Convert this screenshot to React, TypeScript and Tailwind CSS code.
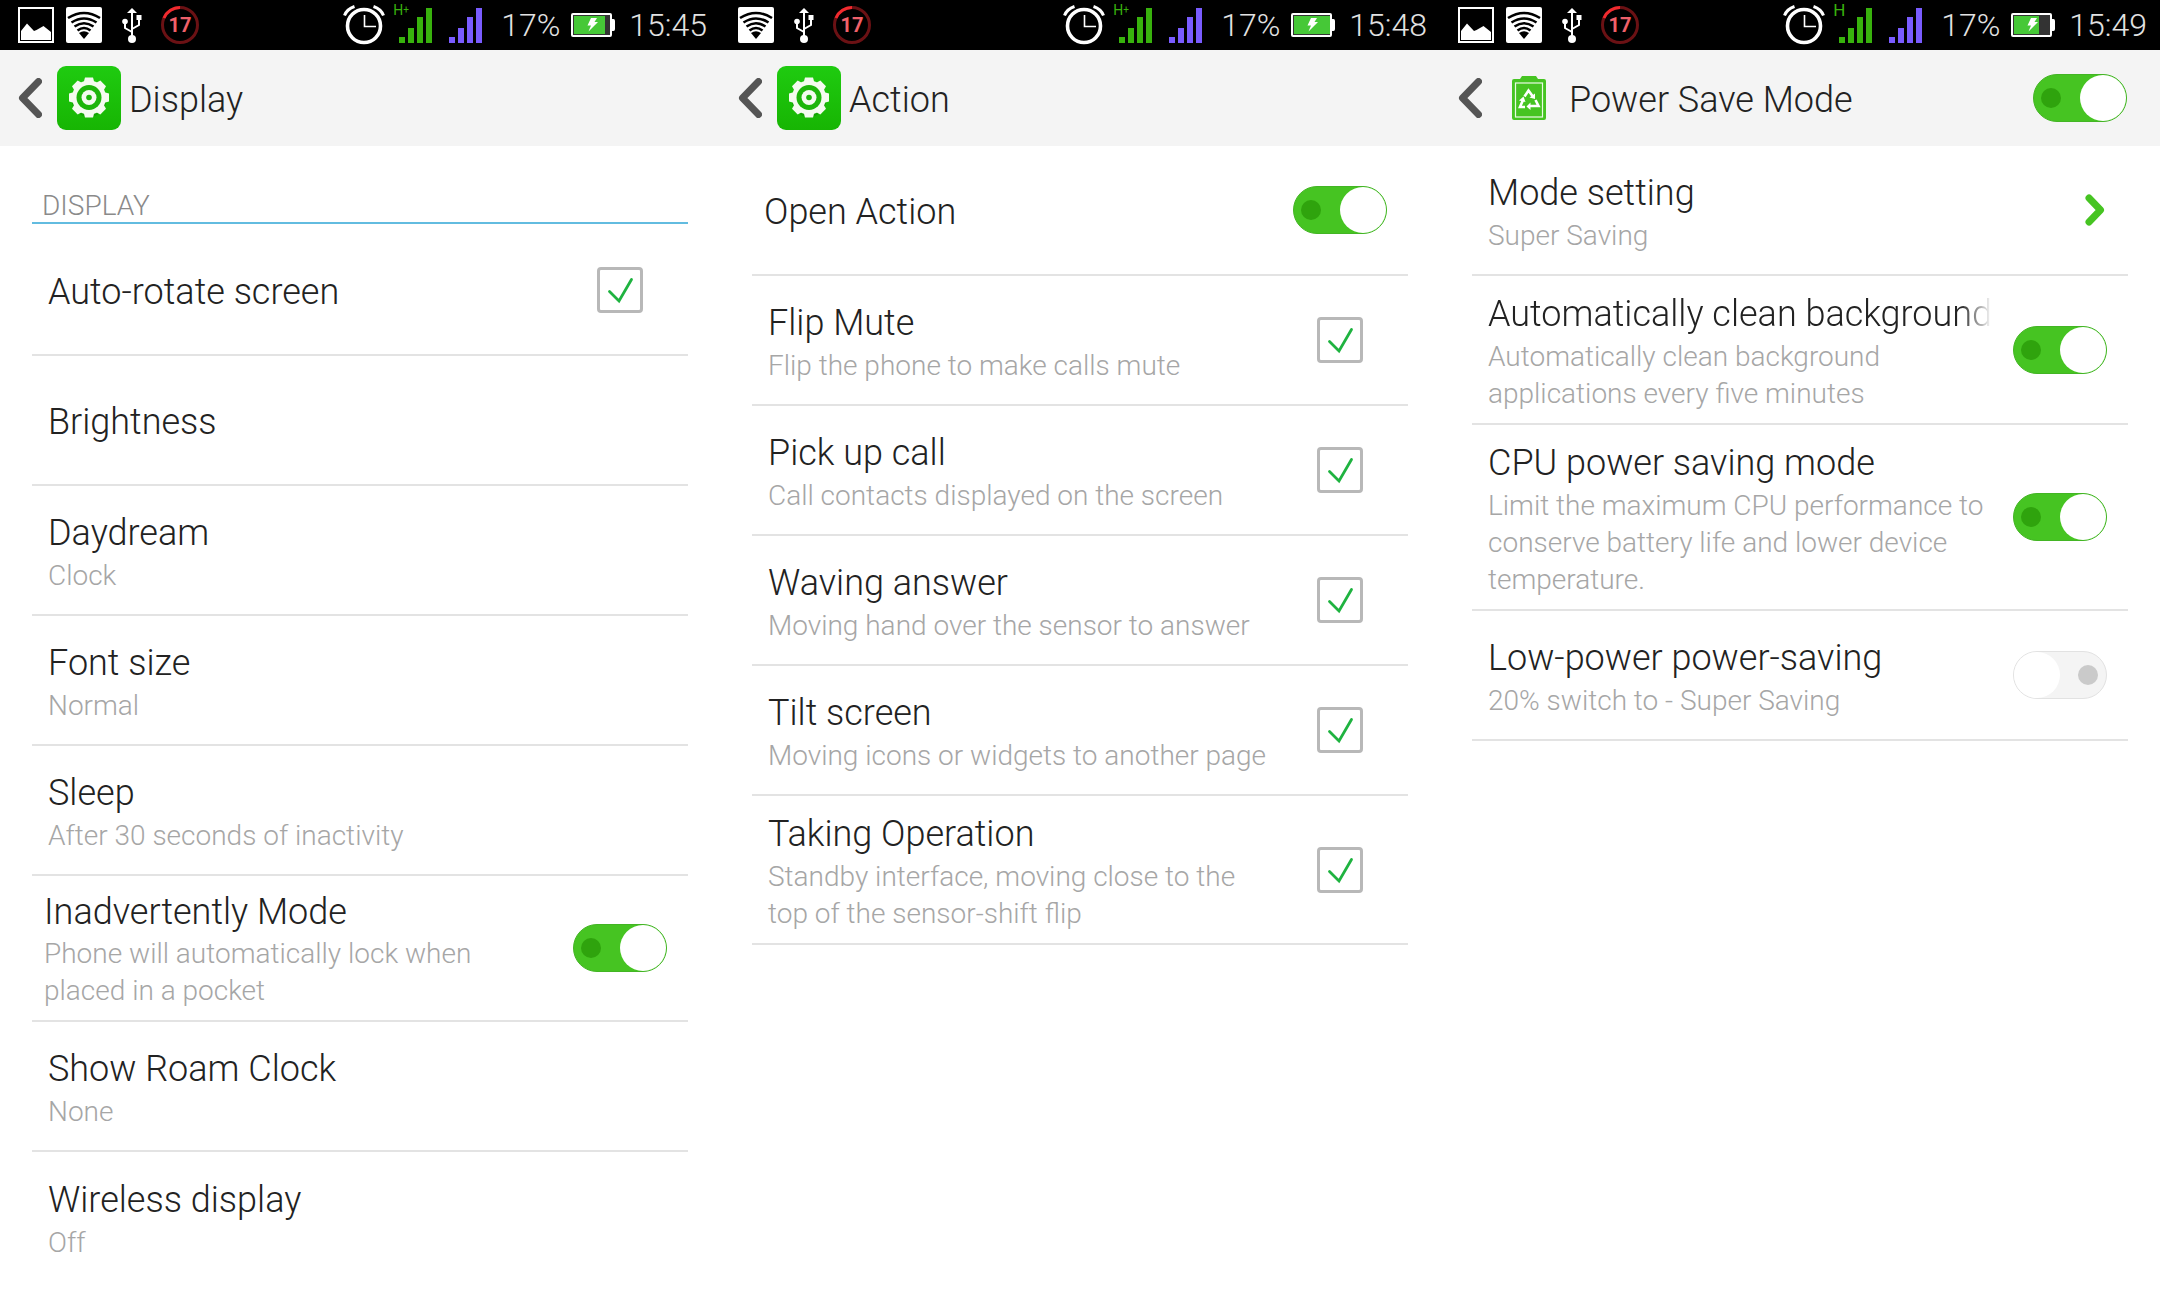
import { useId, type ReactNode } from "react";

/* ---------- status bar icons ---------- */

function PictureIcon() {
  return (
    <svg viewBox="0 0 36 36" className="h-9 w-9" aria-hidden="true">
      <rect x="1" y="1" width="34" height="34" fill="#000" stroke="#fff" strokeWidth="2" />
      <path d="M3 24 L9 16.500 L16 24 L18.500 23 L25.500 19 L33 25 V33 H3 Z" fill="#fff" />
    </svg>
  );
}

function WifiIcon() {
  return (
    <svg viewBox="0 0 36 36" className="h-9 w-9" aria-hidden="true">
      <rect width="36" height="36" rx="2" fill="#fff" />
      <g fill="none" stroke="#000" strokeWidth="2.600">
        <path d="M2 11 Q18 1 34 11" />
        <path d="M5.500 15.500 Q18 7.500 30.500 15.500" />
        <path d="M8.500 19.500 Q18 13 27.500 19.500" />
        <path d="M11.500 23.500 Q18 18.500 24.500 23.500" />
      </g>
      <path d="M13 26 Q18 22.500 23 26 L18 32 Z" fill="#000" />
    </svg>
  );
}

function UsbIcon() {
  return (
    <svg viewBox="0 0 36 36" className="h-9 w-9" aria-hidden="true">
      <g fill="none" stroke="#fff" strokeWidth="2">
        <path d="M18 4 V32" />
        <path d="M18 25 L11 21 V14" />
        <path d="M18 22 L25 18 V12" />
      </g>
      <path d="M18 1 L23 6 H13 Z" fill="#fff" />
      <circle cx="11" cy="14.500" r="2.800" fill="#fff" />
      <rect x="22.500" y="8" width="5" height="5" fill="#fff" />
      <circle cx="18" cy="32" r="4" fill="#fff" />
    </svg>
  );
}

function LevelBadge() {
  return (
    <div className="grid h-10 w-10 place-items-center">
      <svg viewBox="0 0 40 40" className="h-10 w-10 [grid-area:1/1]" fill="none" aria-hidden="true">
        <circle cx="20" cy="20" r="17.500" stroke="#6b1114" strokeWidth="3" />
        <path d="M4 13 A17.500 17.500 0 0 1 20 2.500" stroke="#f02a2e" strokeWidth="3" />
      </svg>
      <span className="text-xl leading-5 font-bold text-[#f0606a] [grid-area:1/1]">17</span>
    </div>
  );
}

function AlarmIcon() {
  return (
    <svg viewBox="0 0 42 40" className="h-10 w-[42px]" fill="none" stroke="#fff" aria-hidden="true">
      <circle cx="21" cy="21" r="16.500" strokeWidth="3.600" />
      <path d="M1.500 10.500 Q4 4 11.500 1.500" strokeWidth="3" />
      <path d="M40.500 10.500 Q38 4 30.500 1.500" strokeWidth="3" />
      <path d="M21.500 10 V21.500 H33" strokeWidth="1.600" />
    </svg>
  );
}

function Bars({ tone }: { tone: "green" | "violet" }) {
  return (
    <svg
      viewBox="0 0 33 35"
      className={tone === "green" ? "h-[35px] w-[33px] fill-[#38b20d]" : "h-[35px] w-[33px] fill-[#7a5cff]"}
      aria-hidden="true"
    >
      <rect x="0" y="29" width="6" height="6" />
      <rect x="9" y="20" width="6" height="15" />
      <rect x="18" y="9" width="6" height="26" />
      <rect x="27" y="0" width="6" height="35" />
    </svg>
  );
}

function BatteryIcon({ fill }: { fill: number }) {
  return (
    <svg viewBox="0 0 44 24" className="h-6 w-11" aria-hidden="true">
      <rect x="1" y="1" width="39" height="22" rx="1" fill="#333" stroke="#fff" strokeWidth="2" />
      <rect x="3" y="3" width={fill} height="18" fill="#46c837" />
      <path d="M41 6 H42.500 Q44 6 44 8 V16 Q44 18 42.500 18 H41 Z" fill="#fff" />
      <path d="M20 5 H26 L23.500 9 H27 L17.500 18.500 L20 12.500 H16.500 Z" fill="#fff" />
    </svg>
  );
}

type StatusProps = { time: string; network: string; level: number; picture?: boolean };

function StatusBar({ time, network, level, picture }: StatusProps) {
  return (
    <div className="flex h-[50px] items-center justify-between bg-black pr-[13px] pl-[18px] text-[32px] leading-[38px] font-light text-[#e2e2e2]">
      <div className="flex items-center gap-3">
        {picture && <PictureIcon />}
        <WifiIcon />
        <UsbIcon />
        <div className="-ml-0.5">
          <LevelBadge />
        </div>
      </div>
      <div className="flex items-center">
        <AlarmIcon />
        <div className="relative mr-[17px] ml-3.5">
          <Bars tone="green" />
          <span
            className={
              network === "H"
                ? "absolute -top-1.5 -left-1.5 text-[17px] leading-4 font-normal text-[#38b20d]"
                : "absolute -top-1.5 -left-1.5 text-sm leading-4 font-normal text-[#38b20d]"
            }
          >
            {network[0]}
            {network.length > 1 && <span className="align-top text-[10px]">+</span>}
          </span>
        </div>
        <Bars tone="violet" />
        <span className="mr-[11px] ml-[19px]">17%</span>
        <BatteryIcon fill={level} />
        <span className="ml-3.5">{time}</span>
      </div>
    </div>
  );
}

/* ---------- header ---------- */

const TEETH = [0, 45, 90, 135, 180, 225, 270, 315];

function GearTile() {
  const id = useId();
  return (
    <svg viewBox="0 0 64 64" className="h-16 w-16" aria-hidden="true">
      <defs>
        <linearGradient id={id} x1="0" y1="0" x2="0" y2="1">
          <stop offset="0" stopColor="#1fcb10" />
          <stop offset="1" stopColor="#17b503" />
        </linearGradient>
      </defs>
      <rect width="64" height="64" rx="9" fill={`url(#${id})`} />
      <circle cx="32" cy="33.500" r="17.500" fill="#0f8f02" opacity="0.5" />
      <g fill="#f4fbf0">
        <circle cx="32" cy="31.500" r="17" />
        {TEETH.map((a) => (
          <path key={a} d="M26.500 17 L28 11.500 H36 L37.500 17 Z" transform={`rotate(${a} 32 31.500)`} />
        ))}
      </g>
      <circle cx="32" cy="31.500" r="12.500" fill="#1db50b" />
      <circle cx="32" cy="31.500" r="7.500" fill="#f4fbf0" />
      <circle cx="32" cy="31.500" r="2.800" fill="#1db50b" />
    </svg>
  );
}

function RecycleBattery() {
  return (
    <svg viewBox="0 0 34 44" className="h-11 w-[34px]" aria-hidden="true">
      <path d="M10 0 H24 L26 3 H32 Q34 3 34 5 V42 Q34 44 32 44 H2 Q0 44 0 42 V5 Q0 3 2 3 H8 Z" fill="#46c422" />
      <rect x="3.500" y="7" width="27" height="34" fill="none" stroke="#eafbe4" strokeWidth="1.200" />
      <g fill="none" stroke="#fff" strokeWidth="2.600">
        <path d="M12.500 20.500 L16.500 14.500 L20.500 20" />
        <path d="M23.500 24 L26.500 30 H17.500" />
        <path d="M13 31 H8 L11 24" />
      </g>
      <g fill="#fff">
        <path d="M23 17.500 V23 L17.500 21.500 Z" />
        <path d="M18.500 26.500 V34 L14.500 30.500 Z" />
        <path d="M7 24.500 L11.500 20.500 L13.500 26 Z" />
      </g>
    </svg>
  );
}

function Header({ title, icon, children }: { title: string; icon: ReactNode; children?: ReactNode }) {
  return (
    <header className="flex h-24 items-center bg-[#f4f4f4] pr-[33px] pl-[18px]">
      <button type="button" aria-label="Back" className="w-6">
        <svg viewBox="0 0 24 40" className="h-10 w-6" fill="none" aria-hidden="true">
          <path d="M20.500 3.500 L4.500 20 L20.500 36.500" stroke="#555" strokeWidth="7" strokeLinecap="round" strokeLinejoin="round" />
        </svg>
      </button>
      <div className="mr-2 ml-[15px] grid w-16 place-items-center">{icon}</div>
      <h1 className="flex-1 pt-1 text-4xl leading-[42px] font-light text-[#222]">{title}</h1>
      {children}
    </header>
  );
}

/* ---------- controls ---------- */

function Switch({ id, on, label }: { id?: string; on?: boolean; label?: string }) {
  return (
    <input
      id={id}
      type="checkbox"
      role="switch"
      aria-label={label}
      defaultChecked={on}
      className="flex h-12 w-[94px] shrink-0 cursor-pointer appearance-none flex-row-reverse items-center justify-between rounded-full border border-[#e2e2e2] bg-[#f4f4f4] pr-2 before:h-5 before:w-5 before:rounded-full before:bg-[#cacaca] after:h-[46px] after:w-[46px] after:rounded-full after:bg-white checked:flex-row checked:border-[#43b524] checked:bg-[#46c422] checked:pr-0 checked:pl-[7px] checked:before:bg-[#2fa30d]"
    />
  );
}

function Tick({ id }: { id: string }) {
  return (
    <span className="grid h-[46px] w-[46px]">
      <input
        id={id}
        type="checkbox"
        defaultChecked
        className="peer h-[46px] w-[46px] cursor-pointer appearance-none rounded-sm border-3 border-[#b8b8b8] bg-white [grid-area:1/1]"
      />
      <svg
        viewBox="0 0 46 46"
        className="pointer-events-none invisible h-[46px] w-[46px] [grid-area:1/1] peer-checked:visible"
        fill="none"
        aria-hidden="true"
      >
        <path d="M12.500 24.500 L22 34 L34.500 12.500" stroke="#1fb340" strokeWidth="2.800" strokeLinecap="round" />
      </svg>
    </span>
  );
}

type Item = {
  title: string;
  note?: string;
  control?: "tick" | "on" | "off" | "next";
  inset?: boolean;
  tight?: boolean;
  fade?: boolean;
};

function Row({ title, note, control, inset, tight, fade }: Item) {
  const id = useId();
  const text = (
    <>
      <span
        className={[
          "block overflow-hidden text-4xl font-light whitespace-nowrap text-[#222]",
          tight ? "leading-[45px]" : "leading-[48px]",
          fade ? "[mask-image:linear-gradient(to_right,#000_calc(100%-32px),transparent)]" : "",
        ].join(" ")}
      >
        {title}
      </span>
      {note && <span className="block text-[28px] leading-[37px] font-light text-[#a6a6a6]">{note}</span>}
    </>
  );
  const body = inset
    ? "min-w-0 flex-1 pt-3.5 pb-[11px] pl-3 text-left"
    : "min-w-0 flex-1 pt-3.5 pb-[11px] pl-4 text-left";
  return (
    <li className="flex min-h-[130px] items-center border-b-2 border-[#e3e3e3]">
      {control === undefined || control === "next" ? (
        <button type="button" className="flex flex-1 items-center">
          <span className={body}>{text}</span>
          <span className="grid w-[136px] place-items-center">
            {control === "next" && (
              <svg viewBox="0 0 20 32" className="ml-[69px] h-8 w-5" fill="none" aria-hidden="true">
                <path d="M4 4 L15.500 16 L4 28" stroke="#46c422" strokeWidth="7" strokeLinecap="round" strokeLinejoin="round" />
              </svg>
            )}
          </span>
        </button>
      ) : (
        <>
          <label htmlFor={id} className={body}>
            {text}
          </label>
          <span className="grid w-[136px] place-items-center">
            {control === "tick" ? <Tick id={id} /> : <Switch id={id} on={control === "on"} />}
          </span>
        </>
      )}
    </li>
  );
}

/* ---------- data ---------- */

const DISPLAY: Item[] = [
  { title: "Auto-rotate screen", control: "tick" },
  { title: "Brightness" },
  { title: "Daydream", note: "Clock" },
  { title: "Font size", note: "Normal" },
  { title: "Sleep", note: "After 30 seconds of inactivity" },
  {
    title: "Inadvertently Mode",
    note: "Phone will automatically lock when placed in a pocket",
    control: "on",
    inset: true,
    tight: true,
  },
  { title: "Show Roam Clock", note: "None" },
  { title: "Wireless display", note: "Off" },
];

const ACTION: Item[] = [
  { title: "Open Action", control: "on", inset: true },
  { title: "Flip Mute", note: "Flip the phone to make calls mute", control: "tick" },
  { title: "Pick up call", note: "Call contacts displayed on the screen", control: "tick" },
  { title: "Waving answer", note: "Moving hand over the sensor to answer", control: "tick" },
  { title: "Tilt screen", note: "Moving icons or widgets to another page", control: "tick" },
  {
    title: "Taking Operation",
    note: "Standby interface, moving close to the top of the sensor-shift flip",
    control: "tick",
  },
];

const POWER: Item[] = [
  { title: "Mode setting", note: "Super Saving", control: "next" },
  {
    title: "Automatically clean background",
    note: "Automatically clean background applications every five minutes",
    control: "on",
    fade: true,
  },
  {
    title: "CPU power saving mode",
    note: "Limit the maximum CPU performance to conserve battery life and lower device temperature.",
    control: "on",
  },
  { title: "Low-power power-saving", note: "20% switch to - Super Saving", control: "off" },
];

export default function App() {
  return (
    <main className="grid min-h-screen grid-cols-3 bg-white font-['Roboto',sans-serif]">
      <section className="min-w-0">
        <StatusBar time="15:45" network="H+" level={31} picture />
        <Header title="Display" icon={<GearTile />} />
        <div className="px-8">
          <h2 className="mb-0.5 border-b-2 border-[#62bce0] pt-11 pl-2.5 text-[28px] leading-8 font-light text-[#8a8a8a]">
            DISPLAY
          </h2>
          <ul className="[&>li:last-child]:border-b-0">
            {DISPLAY.map((item) => (
              <Row key={item.title} {...item} />
            ))}
          </ul>
        </div>
      </section>

      <section className="min-w-0">
        <StatusBar time="15:48" network="H+" level={36} />
        <Header title="Action" icon={<GearTile />} />
        <ul className="px-8">
          {ACTION.map((item) => (
            <Row key={item.title} {...item} />
          ))}
        </ul>
      </section>

      <section className="min-w-0">
        <StatusBar time="15:49" network="H" level={25} picture />
        <Header title="Power Save Mode" icon={<RecycleBattery />}>
          <Switch on label="Power Save Mode" />
        </Header>
        <ul className="px-8">
          {POWER.map((item) => (
            <Row key={item.title} {...item} />
          ))}
        </ul>
      </section>
    </main>
  );
}
